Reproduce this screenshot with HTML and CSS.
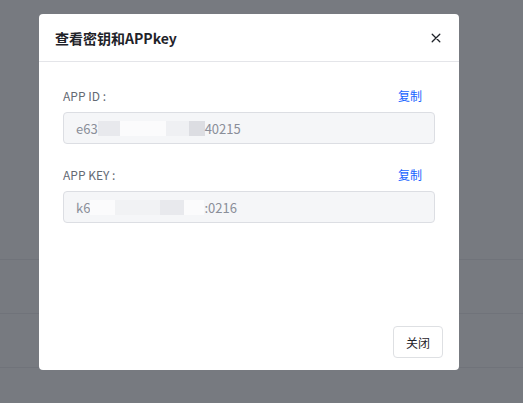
FILE: index.html
```html
<!DOCTYPE html>
<html lang="zh-CN">
<head>
<meta charset="utf-8">
<title>查看密钥和APPkey</title>
<link rel="stylesheet" href="styles.css">
</head>
<body>
<div class="page">
  <div class="rows">
    <div class="row"></div>
    <div class="row"></div>
    <div class="row"></div>
  </div>
</div>
<div class="mask"></div>
<div class="dialog">
  <div class="dialog-header">
    <div class="dialog-title">查看密钥和APPkey</div>
    <svg class="close" width="10" height="10" viewBox="0 0 10 10"><path d="M1.2 1.2L8.8 8.8M8.8 1.2L1.2 8.8" stroke="#1f2329" stroke-width="1.3" stroke-linecap="round"/></svg>
  </div>
  <div class="dialog-body">
    <div class="field">
      <div class="field-head">
        <span class="label">APP ID :</span>
        <span class="copy">复制</span>
      </div>
      <div class="input"><span>e63</span><span class="blk b1" style="width:22px"></span><span class="blk b2" style="width:46px"></span><span class="blk b3" style="width:23px"></span><span class="blk b4" style="width:16px"></span><span>40215</span></div>
    </div>
    <div class="field">
      <div class="field-head">
        <span class="label">APP KEY :</span>
        <span class="copy">复制</span>
      </div>
      <div class="input"><span>k6</span><span class="blk b2" style="width:25px"></span><span class="blk b5" style="width:45px"></span><span class="blk b1" style="width:24px"></span><span class="blk b2" style="width:20px"></span><span>:0216</span></div>
    </div>
  </div>
  <div class="dialog-footer">
    <button class="btn">关闭</button>
  </div>
</div>
</body>
</html>
```

FILE: styles.css
```css
html, body {
  margin: 0;
  padding: 0;
  width: 523px;
  height: 403px;
  overflow: hidden;
}
body {
  font-family: "Noto Sans CJK SC", "Noto Sans", sans-serif;
  background: #ffffff;
  position: relative;
}
.page {
  height: 403px;
}
.rows {
  padding-top: 259px;
}
.row {
  height: 53px;
  border-top: 1px solid #d3d5d9;
}
.mask {
  position: absolute;
  inset: 0;
  background: rgba(92, 95, 102, 0.83);
}
.dialog {
  position: absolute;
  left: 39px;
  top: 14px;
  width: 420px;
  height: 356px;
  background: #fff;
  border-radius: 4px;
  display: flex;
  flex-direction: column;
}
.dialog-header {
  height: 47px;
  border-bottom: 1px solid #e4e5e9;
  display: flex;
  align-items: center;
  justify-content: space-between;
  padding: 0 18px 0 16px;
}
.dialog-title {
  font-size: 14px;
  font-weight: 700;
  color: #1f2329;
  line-height: 20px;
  padding-top: 1px;
}
.close {
  display: block;
}
.dialog-body {
  flex: 1;
  padding: 24px 24px 0 24px;
  display: flex;
  flex-direction: column;
  gap: 21px;
}
.field-head {
  display: flex;
  justify-content: space-between;
  align-items: center;
  height: 20px;
  line-height: 20px;
  font-size: 12px;
  margin-bottom: 6px;
  padding-right: 13px;
}
.label {
  color: #646a73;
}
.copy {
  color: #1664ff;
}
.input {
  height: 30px;
  border: 1px solid #dcdee3;
  border-radius: 4px;
  background: #f5f6f8;
  display: flex;
  align-items: center;
  padding: 0 12px;
  font-size: 13px;
  color: #8a8e99;
}
.blk {
  display: inline-block;
  height: 15px;
}
.b1 { background: #e8e9ed; }
.b2 { background: #fbfbfc; }
.b3 { background: #eff0f3; }
.b4 { background: #dcdde2; }
.b5 { background: #f1f2f4; }
.dialog-footer {
  display: flex;
  justify-content: flex-end;
  padding: 0 16px 12px 0;
}
.btn {
  width: 50px;
  height: 32px;
  border: 1px solid #dee0e3;
  border-radius: 4px;
  background: #fff;
  font-family: "Noto Sans CJK SC", sans-serif;
  font-size: 12px;
  color: #1f2329;
  padding: 0;
}
```
